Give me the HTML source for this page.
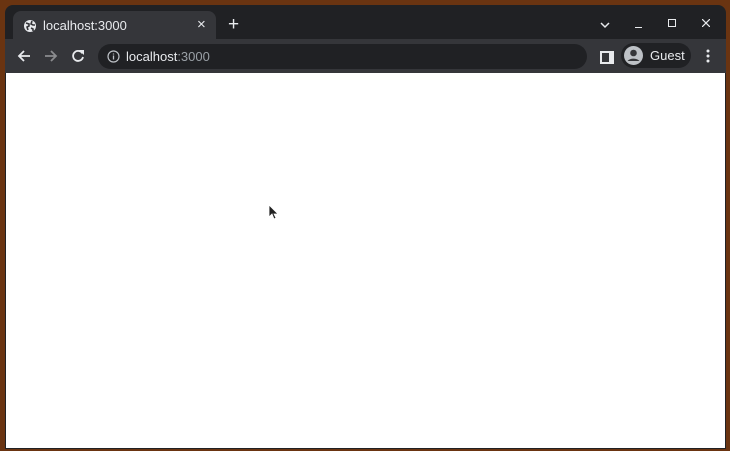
<!DOCTYPE html>
<html><head><style>
body{margin:0;width:730px;height:451px;background:#6a3411;position:relative;overflow:hidden;font-family:"Liberation Sans",sans-serif}
.win{position:absolute;left:5px;top:5px;width:721px;height:444px;background:#202124;border-radius:8px 8px 0 0;overflow:hidden}
.tab{position:absolute;left:8px;top:6px;width:203px;height:30px;background:#35363a;border-radius:8px 8px 0 0}
.tb{position:absolute;left:0;top:34px;width:721px;height:34px;background:#35363a}
.omni{position:absolute;left:93px;top:5px;width:489px;height:25px;background:#202124;border-radius:13px}
.content{position:absolute;left:1px;top:68px;width:719px;height:375px;background:#fff}
.t{position:absolute;color:#e8eaed;font-size:13px}
svg{position:absolute}
</style></head><body>
<div class="win">
<div class="tab"></div>
<svg style="left:18px;top:14px" width="14" height="14" viewBox="0 0 14 14"><circle cx="7" cy="7" r="6" fill="#e8eaed"/><path d="M3 4l3 1 0 2-2 1 1 3M9 2l-1 3 2 1 2 0M8 9l2 1 0 2" stroke="#35363a" stroke-width="1.6" fill="none"/></svg>
<div class="t" style="left:38px;top:13px">localhost:3000</div>
<div class="t" style="left:192px;top:11px;font-size:15px">×</div>
<div class="t" style="left:223px;top:9px;font-size:19px">+</div>
<svg style="left:595px;top:17px" width="10" height="7"><path d="M1 1l4 4 4-4" stroke="#e8eaed" stroke-width="1.5" fill="none"/></svg>
<div style="position:absolute;left:630px;top:22px;width:7px;height:1px;background:#e8eaed"></div>
<div style="position:absolute;left:663px;top:14px;width:6px;height:6px;border:1px solid #e8eaed"></div>
<svg style="left:697px;top:14px" width="8" height="8"><path d="M0 0l8 8M8 0l-8 8" stroke="#e8eaed" stroke-width="1.2"/></svg>
<div class="tb">
<svg style="left:12px;top:10px" width="14" height="14"><path d="M13 7H2M7 2L2 7l5 5" stroke="#e8eaed" stroke-width="1.8" fill="none"/></svg>
<svg style="left:39px;top:10px" width="14" height="14"><path d="M1 7h11M7 2l5 5-5 5" stroke="#8b8c8f" stroke-width="1.8" fill="none"/></svg>
<svg style="left:66px;top:10px" width="14" height="14"><path d="M11.5 4.5A5 5 0 1 0 12 8" stroke="#e8eaed" stroke-width="1.8" fill="none"/><path d="M8 1h5v5z" fill="#e8eaed"/></svg>
<div class="omni">
<svg style="left:9px;top:6px" width="13" height="13"><circle cx="6.5" cy="6.5" r="5.5" stroke="#bdc1c6" stroke-width="1.2" fill="none"/><path d="M6.5 5.5v4M6.5 3.5v1" stroke="#bdc1c6" stroke-width="1.3"/></svg>
<div class="t" style="left:28px;top:5px">localhost<span style="color:#9aa0a6">:3000</span></div>
</div>
<div style="position:absolute;left:595px;top:12px;width:7px;height:9px;border:2px solid #e8eaed;border-right-width:5px"></div>
<div style="position:absolute;left:616px;top:4px;width:70px;height:25px;background:#202124;border-radius:13px"></div>
<svg style="left:619px;top:7px" width="19" height="19"><circle cx="9.5" cy="9.5" r="9.5" fill="#bdc1c6"/><circle cx="9.5" cy="7" r="3.3" fill="#35363a"/><path d="M3.5 15a7 5 0 0 1 12 0" fill="#35363a"/></svg>
<div class="t" style="left:645px;top:9px">Guest</div>
<svg style="left:701px;top:10px" width="4" height="14"><circle cx="2" cy="2" r="1.5" fill="#e8eaed"/><circle cx="2" cy="7" r="1.5" fill="#e8eaed"/><circle cx="2" cy="12" r="1.5" fill="#e8eaed"/></svg>
</div>
<div class="content"></div>
</div>
<svg style="left:268px;top:204px" width="10" height="16"><path d="M1 1v12l3-3 2 5 2-1-2-4h4z" fill="#222" stroke="#fff" stroke-width="0.8"/></svg>
</body></html>
